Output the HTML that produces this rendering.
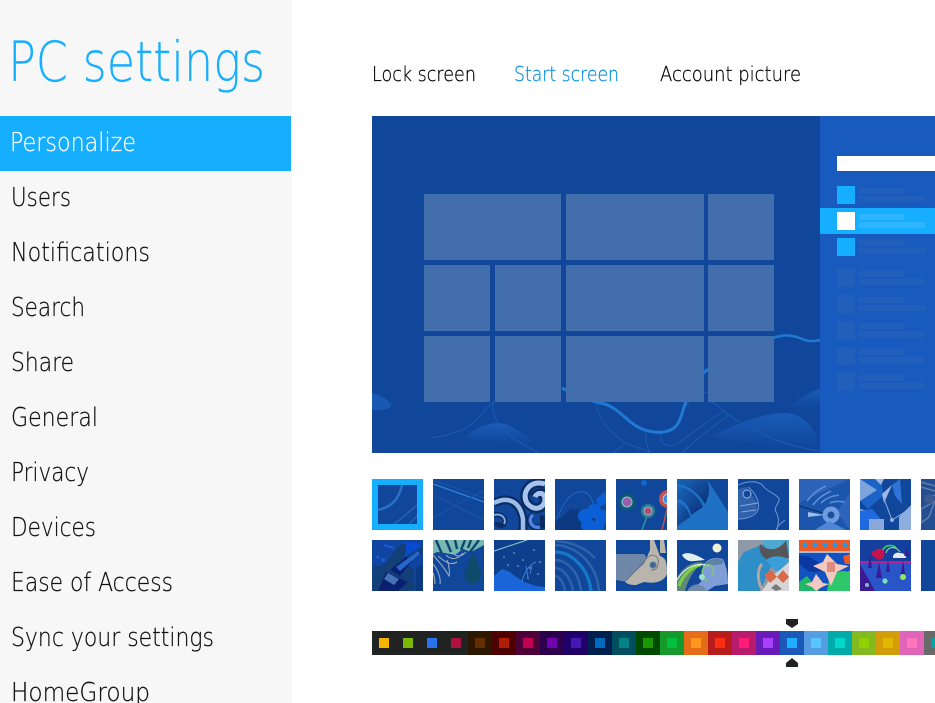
<!DOCTYPE html>
<html><head><meta charset="utf-8"><title>PC settings</title>
<style>
html,body{margin:0;padding:0;background:#fff;width:935px;height:703px;overflow:hidden}
svg{display:block}
text{font-family:"DejaVu Sans","Liberation Sans",sans-serif;font-weight:200}
.n{font-size:25.5px;fill:#111;stroke:#111;stroke-width:.25px}
.w{font-size:25.5px;fill:#fff;stroke:#fff;stroke-width:.25px}
.t{font-size:20px;fill:#000;stroke:#000;stroke-width:.25px}
.a{font-size:20px;fill:#0a8fe0;stroke:#0a8fe0;stroke-width:.25px}
</style></head><body>
<svg width="935" height="703" viewBox="0 0 935 703" xmlns="http://www.w3.org/2000/svg">
<defs>
<linearGradient id="b" x1="0" y1="0" x2="0" y2="1"><stop offset="0" stop-color="#1a5cb8"/><stop offset="1" stop-color="#10479a"/></linearGradient>
<linearGradient id="s" x1="0" y1="0" x2="1" y2="1"><stop offset="0" stop-color="#1a66b8"/><stop offset="1" stop-color="#0a2f78"/></linearGradient>
</defs>
<rect x="0" y="0" width="292" height="703" fill="#f7f7f7"/>
<rect x="0" y="116" width="291" height="55" fill="#16aeff"/>
<text x="8" y="81" font-size="55" fill="#16aeff" stroke="#16aeff" stroke-width=".2" textLength="257" lengthAdjust="spacingAndGlyphs">PC settings</text>
<text x="10" y="151" class="w" textLength="126" lengthAdjust="spacingAndGlyphs">Personalize</text>
<text x="11" y="206" class="n" textLength="60" lengthAdjust="spacingAndGlyphs">Users</text>
<text x="11" y="261" class="n" textLength="139" lengthAdjust="spacingAndGlyphs">Notifications</text>
<text x="11" y="316" class="n" textLength="74" lengthAdjust="spacingAndGlyphs">Search</text>
<text x="11" y="371" class="n" textLength="63" lengthAdjust="spacingAndGlyphs">Share</text>
<text x="11" y="426" class="n" textLength="87" lengthAdjust="spacingAndGlyphs">General</text>
<text x="11" y="481" class="n" textLength="78" lengthAdjust="spacingAndGlyphs">Privacy</text>
<text x="11" y="536" class="n" textLength="85" lengthAdjust="spacingAndGlyphs">Devices</text>
<text x="11" y="591" class="n" textLength="162" lengthAdjust="spacingAndGlyphs">Ease of Access</text>
<text x="11" y="646" class="n" textLength="203" lengthAdjust="spacingAndGlyphs">Sync your settings</text>
<text x="11" y="701" class="n" textLength="139" lengthAdjust="spacingAndGlyphs">HomeGroup</text>

<text x="372" y="81" class="t" textLength="104" lengthAdjust="spacingAndGlyphs">Lock screen</text>
<text x="514" y="81" class="a" textLength="105" lengthAdjust="spacingAndGlyphs">Start screen</text>
<text x="660" y="81" class="t" textLength="141" lengthAdjust="spacingAndGlyphs">Account picture</text>

<!-- preview -->
<rect x="372" y="116" width="563" height="337" fill="#10479a"/>
<path d="M372 393C381 395 389 400 391 405C391 410 381 410 372 410Z" fill="#1a59b3"/>
<path d="M466 437C478 424 498 420 510 426C520 431 529 438 535 443C510 444 485 442 466 437Z" fill="url(#b)"/>
<path d="M712 436C740 422 765 413 785 413C805 414 817 430 819 447C785 446 745 444 712 436Z" fill="url(#b)"/>
<path d="M792 406C798 398 810 392 820 389V408C810 408 800 408 792 406Z" fill="url(#b)"/>
<g fill="none" stroke="#1a5cb2" stroke-width="1">
<path d="M430 438C460 434 474 426 485 410C490 404 494 402 498 400"/>
<path d="M493 402C490 425 515 442 540 453"/>
<path d="M596 403C598 420 610 432 625 443L652 453"/>
<path d="M625 443C622 447 618 450 612 453"/>
<path d="M646 432C645 440 647 447 650 453"/>
<path d="M662 432C658 442 664 446 672 446C680 445 690 432 724 411"/>
<path d="M682 453C695 440 715 425 728 416C725 410 718 405 708 400"/>
<path d="M728 414C750 430 785 447 820 451"/>
<path d="M686 406C692 398 700 394 708 392"/>
</g>
<path d="M562 388C575 395 590 401 600 403C615 405 624 418 636 426C648 433 664 435 674 428C682 422 683 405 690 392C695 382 702 374 708 369" fill="none" stroke="#2079d4" stroke-width="3"/>
<path d="M774 338C785 333 795 336 805 340C812 342 816 341 820 340" fill="none" stroke="#2079d4" stroke-width="2.5"/>
<g fill="#436eac">
<rect x="424" y="194" width="137" height="66"/><rect x="566" y="194" width="138" height="66"/><rect x="708" y="194" width="66" height="66"/>
<rect x="424" y="265" width="66" height="66"/><rect x="495" y="265" width="66" height="66"/><rect x="566" y="265" width="138" height="66"/><rect x="708" y="265" width="66" height="66"/>
<rect x="424" y="336" width="66" height="66"/><rect x="495" y="336" width="66" height="66"/><rect x="566" y="336" width="138" height="66"/><rect x="708" y="336" width="66" height="66"/>
</g>
<rect x="820" y="116" width="115" height="337" fill="#185abd"/>
<rect x="837" y="156" width="98" height="15" fill="#fff"/>
<rect x="820" y="208" width="115" height="26" fill="#16aeff"/>
<g fill="#16aeff"><rect x="837" y="186" width="18" height="18"/><rect x="837" y="238" width="18" height="18"/></g>
<rect x="837" y="212" width="18" height="18" fill="#fff"/>
<g fill="#2160ba">
<rect x="837" y="269" width="18" height="18"/><rect x="837" y="295" width="18" height="18"/><rect x="837" y="321" width="18" height="18"/><rect x="837" y="347" width="18" height="18"/><rect x="837" y="373" width="18" height="18"/>
<rect x="859" y="188" width="45" height="6"/><rect x="859" y="196" width="66" height="6"/>
<rect x="859" y="240" width="45" height="6"/><rect x="859" y="248" width="66" height="6"/>
<rect x="859" y="271" width="45" height="6"/><rect x="859" y="279" width="66" height="6"/>
<rect x="859" y="297" width="45" height="6"/><rect x="859" y="305" width="66" height="6"/>
<rect x="859" y="323" width="45" height="6"/><rect x="859" y="331" width="66" height="6"/>
<rect x="859" y="349" width="45" height="6"/><rect x="859" y="357" width="66" height="6"/>
<rect x="859" y="375" width="45" height="6"/><rect x="859" y="383" width="66" height="6"/>
</g>
<g fill="#2fb5ff"><rect x="859" y="214" width="45" height="6"/><rect x="859" y="222" width="66" height="6"/></g>

<!-- row 1 thumbs -->
<svg x="372" y="479" width="51" height="51" viewBox="0 0 51 51"><rect width="51" height="51" fill="#16aeff"/><rect x="6" y="6" width="39" height="39" fill="#10479a"/>
<svg x="6" y="6" width="39" height="39" viewBox="6 6 39 39"><path d="M6 31C20 28 27 20 30 6" fill="none" stroke="#2a70c4" stroke-width="2.5"/><path d="M22 45C32 38 38 32 46 25M37 45L46 36" fill="none" stroke="#2464b8" stroke-width="1.4"/></svg></svg>
<svg x="433" y="479" width="51" height="51" viewBox="0 0 51 51"><rect width="51" height="51" fill="#10479a"/><path d="M0 5L51 23" stroke="#2a86d8" stroke-width="1.2"/><path d="M0 1L51 19M0 16L51 41M0 39L51 11" stroke="#1a55ac" stroke-width="1"/></svg>
<svg x="494" y="479" width="51" height="51" viewBox="0 0 51 51"><rect width="51" height="51" fill="#10479a"/>
<g fill="none"><path d="M0 24C14 17 26 22 29 40V51" stroke="#0b2c62" stroke-width="9"/><path d="M0 24C14 17 26 22 29 40V51" stroke="#9cbdea" stroke-width="4.5"/><path d="M51 5C36 0 27 14 33 24C40 33 51 30 51 19C50 13 43 13 41 18" stroke="#0b2c62" stroke-width="10"/><path d="M51 5C36 0 27 14 33 24C40 33 51 30 51 19C50 13 43 13 41 18" stroke="#a8c4ee" stroke-width="5"/><path d="M0 36C8 34 13 40 10 45C7 48 3 46 3 43" stroke="#0b2c62" stroke-width="5"/><path d="M0 36C8 34 13 40 10 45" stroke="#7fa7e2" stroke-width="2"/><path d="M39 36C32 40 37 51 46 48C51 45 50 39 46 39" stroke="#0b2c62" stroke-width="6"/><path d="M39 36C33 41 38 50 46 48" stroke="#4d82e6" stroke-width="3.5"/></g></svg>
<svg x="555" y="479" width="51" height="51" viewBox="0 0 51 51"><rect width="51" height="51" fill="#10479a"/><path d="M0 43L16 30L45 32L35 51H0Z" fill="#0c3a82"/><path d="M2 40C10 18 20 11 30 13C36 15 38 24 40 30" fill="none" stroke="#1f66c4" stroke-width="1"/><g fill="#0a5fd6"><circle cx="39" cy="32" r="7"/><circle cx="30" cy="37" r="7"/><circle cx="47" cy="38" r="7"/><circle cx="33" cy="46" r="7"/><circle cx="43" cy="47" r="6"/><circle cx="46" cy="22" r="5"/><circle cx="50" cy="17" r="4"/></g></svg>
<svg x="616" y="479" width="51" height="51" viewBox="0 0 51 51"><rect width="51" height="51" fill="#10479a"/><path d="M12 28L28 44" stroke="#0e4a8e" stroke-width="1.5"/><path d="M33 32L26 51" stroke="#2a9a9c" stroke-width="1.4"/><path d="M51 30L46 51" stroke="#c85050" stroke-width="1.4"/><circle cx="28" cy="4" r="3" fill="#0a6ad0"/><circle cx="11" cy="23" r="8.5" fill="#0d5a6e"/><circle cx="11" cy="23" r="5" fill="#9a5fa8"/><circle cx="11" cy="23" r="5" fill="none" stroke="#8cc4e8" stroke-width="1"/><circle cx="32" cy="32" r="7" fill="#2e7f8e"/><circle cx="32" cy="32" r="4" fill="#ac4a78" stroke="#a0d0d8" stroke-width=".8"/><circle cx="52" cy="20" r="9" fill="#c85050"/><circle cx="52" cy="20" r="5" fill="#3d8fd8" stroke="#b8d8f0" stroke-width=".8"/></svg>
<svg x="677" y="479" width="51" height="51" viewBox="0 0 51 51"><rect width="51" height="51" fill="#1e70c4"/><path d="M30 0H51V33Z" fill="#10479a"/><path d="M0 0H30C33 8 33 16 28 25C22 15 12 6 0 5Z" fill="url(#s)"/><path d="M0 8C12 8 22 18 26 28L14 36C12 26 6 20 0 20Z" fill="url(#s)"/><path d="M0 24C6 24 11 30 13 38L0 47Z" fill="url(#s)"/></svg>
<svg x="738" y="479" width="51" height="51" viewBox="0 0 51 51"><rect width="51" height="51" fill="#10479a"/><path d="M0 6C12 1 22 2 26 8C30 13 40 16 41 20C42 24 35 28 38 33C42 40 40 46 39 51M0 40C10 40 18 36 20 31C22 24 18 14 10 8M47 41C43 44 39 48 38 51" fill="none" stroke="#7096cf" stroke-width="1"/><path d="M0 10L8 8L18 22L20 32L8 39L0 40Z" fill="#4a76bb" opacity=".55"/><circle cx="9" cy="15" r="4" fill="#10479a" stroke="#9ab4dc" stroke-width="1"/><path d="M2 27L20 24M3 33L18 31" stroke="#89a8d8" stroke-width="1"/></svg>
<svg x="799" y="479" width="51" height="51" viewBox="0 0 51 51"><rect width="51" height="51" fill="#2d63b8"/><path d="M0 24L51 0V14L38 33L51 51H0Z" fill="#1c56ac"/><g fill="none" stroke="#5e8fd6" stroke-width="1.6"><path d="M8 22C14 14 20 10 27 7"/><path d="M14 26C20 18 26 15 32 12"/><path d="M22 24C26 20 32 17 40 16"/><path d="M31 24C35 22 40 22 46 23"/></g><path d="M0 27L24 34" stroke="#0a2a66" stroke-width="1"/><path d="M9 33L25 36L9 38Z" fill="#9dbce8"/><circle cx="32" cy="36" r="8.5" fill="#6f9ce0"/><circle cx="32" cy="36" r="3.5" fill="#1c4f9e"/><path d="M16 51L30 42L47 51Z" fill="#4f86d6"/></svg>
<svg x="860" y="479" width="51" height="51" viewBox="0 0 51 51"><rect width="51" height="51" fill="#10479a"/><path d="M0 0H20L24 16L8 30L0 22Z" fill="#1c63c8"/><path d="M0 0L17 11L0 22Z" fill="#7fa4dc"/><path d="M15 0H24L21 6ZM22 15L32 6L24 24Z" fill="#9cb8e0"/><path d="M32 6L40 0L42 25L35 17Z" fill="#2e74d8"/><path d="M0 30L10 32L0 42Z" fill="#88a8dc"/><path d="M0 51V32L12 30L20 39V51Z" fill="#1f6ae0"/><path d="M9 40H24V51H9Z" fill="#8aa8dc"/><path d="M39 51V38L51 26V51Z" fill="#8dadde"/><path d="M23 17L32 41L48 31" fill="none" stroke="#8fb0e2" stroke-width="1"/><circle cx="32" cy="41" r="2" fill="#8fb0e2"/></svg>
<svg x="921" y="479" width="14" height="51" viewBox="0 0 14 51"><rect width="14" height="51" fill="#234f92"/><path d="M0 3L14 7M0 8L14 12M3 20L14 16M0 30L14 22L8 38L0 44Z" fill="none" stroke="#5f7aa8" stroke-width="1.6"/><circle cx="8" cy="20" r="5" fill="#3a5a90"/></svg>

<!-- row 2 thumbs -->
<svg x="372" y="540" width="51" height="51" viewBox="0 0 51 51"><rect width="51" height="51" fill="#0f45a0"/><path d="M30 3C38 0 51 3 51 10L42 20L30 15Z" fill="#0a4ad0"/><path d="M44 51V28L51 24V51Z" fill="#0c3a82"/><path d="M4 25C12 30 20 12 30 4C36 2 35 12 31 18L51 6V12L36 26C44 28 44 36 40 40C46 44 44 51 34 51H0V35C0 30 2 26 4 25Z" fill="#123f78"/><path d="M14 32L36 42L26 51H6ZM18 30L34 17L40 21L28 36Z" fill="#0a1f70"/><path d="M24 27L46 11L48 14L28 31Z" fill="#2667c8"/><path d="M16 33L27 39L22 45L12 39Z" fill="#4472b8"/><circle cx="11" cy="20" r="2" fill="#1a5cd8"/><circle cx="6" cy="17" r="1.5" fill="#1a5cd8"/><path d="M12 5L22 8" stroke="#1a5cd8" stroke-width="2"/></svg>
<svg x="433" y="540" width="51" height="51" viewBox="0 0 51 51"><rect width="51" height="51" fill="#10479a"/><path d="M0 0H51V5L38 12L30 9L22 15L12 13L4 12L0 14Z" fill="#79b7b2"/><path d="M3 0L9 14M13 0L18 12M22 0L24 9M32 0L28 10M38 0L35 8M46 0L37 12" stroke="#0e4870" stroke-width="2.4"/><path d="M40 12C44 24 50 30 47 38C45 45 35 45 32 38C30 30 36 24 40 12Z" fill="#0e4a6a"/><g fill="none" stroke="#9aa8b8" stroke-width="1.1"><path d="M0 15C8 24 13 30 16 36C17 34 16 24 14 20M0 24C5 30 8 38 7 44M0 33C2 38 2 41 2 44M5 16C12 22 18 26 24 22M13 15C18 20 24 20 30 13M22 15C26 17 29 16 33 12"/></g></svg>
<svg x="494" y="540" width="51" height="51" viewBox="0 0 51 51"><rect width="51" height="51" fill="#0e3f8c"/><path d="M0 11L33 0" stroke="#7fb6c8" stroke-width="1.2"/><g fill="#8fb8d8"><circle cx="10" cy="17" r=".8"/><circle cx="20" cy="13" r=".8"/><circle cx="29" cy="20" r=".8"/><circle cx="40" cy="10" r=".8"/><circle cx="46" cy="22" r=".8"/><circle cx="14" cy="25" r=".8"/><circle cx="24" cy="26" r=".8"/><circle cx="36" cy="28" r=".8"/><circle cx="44" cy="34" r=".8"/><circle cx="34" cy="38" r=".8"/></g><path d="M0 36L8 29L16 32L22 37L30 42L42 46L51 47V51H0Z" fill="#1a66d8"/><path d="M28 42C30 32 36 24 42 22M32 26L34 38M38 26L36 34" fill="none" stroke="#3f7fd6" stroke-width="1"/></svg>
<svg x="555" y="540" width="51" height="51" viewBox="0 0 51 51"><rect width="51" height="51" fill="#10479a"/><g fill="none" stroke="#2f62ab" stroke-width="2.5"><path d="M0 1C18 2 30 8 40 18"/><path d="M0 20C12 20 24 32 26 51"/><path d="M0 28C8 28 16 38 18 51"/><path d="M0 36C4 36 9 43 10 51"/></g><path d="M0 5C24 6 42 26 44 51" fill="none" stroke="#2f62ab" stroke-width="2.5"/><path d="M0 12C18 12 34 30 36 51" fill="none" stroke="#1579c8" stroke-width="3.2"/></svg>
<svg x="616" y="540" width="51" height="51" viewBox="0 0 51 51"><rect width="51" height="51" fill="#10479a"/><path d="M0 14L28 14L40 30L12 42L0 40Z" fill="#6f87a8"/><path d="M34 0H38L44 16C50 18 51 22 51 34C48 42 38 44 28 42L20 45C14 45 10 44 9 41L28 24L34 10Z" fill="#b9b5ad"/><path d="M44 0H48L50 13L44 13Z" fill="#b9b5ad"/><circle cx="37" cy="25" r="3.5" fill="#3f7f98"/><circle cx="37" cy="25" r="1.6" fill="#5a4a98"/><path d="M10 41L32 17C38 12 44 18 42 24C41 30 38 30 35 30" fill="none" stroke="#6a6a70" stroke-width=".8"/></svg>
<svg x="677" y="540" width="51" height="51" viewBox="0 0 51 51"><rect width="51" height="51" fill="#10479a"/><path d="M26 26C30 18 38 17 46 19C48 24 51 30 51 44L38 46L30 51H12L24 42Z" fill="#7f9ed8"/><path d="M28 23C34 18 42 18 46 20L46 24L30 26Z" fill="#5f83a8"/><circle cx="40" cy="8" r="4.5" fill="#eef0d8"/><path d="M5 15C10 10 22 16 28 20L18 21C12 22 8 20 5 15Z" fill="#dfeef0"/><path d="M0 38C6 26 18 20 28 23C24 24 14 30 8 51H0Z" fill="#5f8a7a"/><path d="M2 46C6 34 16 26 24 25" fill="none" stroke="#7ad43a" stroke-width="3"/><path d="M0 40C8 26 22 22 32 26" fill="none" stroke="#dff0f0" stroke-width="1.2"/><path d="M31 41C24 38 23 28 30 25C36 24 38 30 35 36" fill="none" stroke="#7fc86a" stroke-width="1.6"/><circle cx="25" cy="37" r="3" fill="#9ce0c8"/><path d="M10 51C14 44 22 42 28 48L30 51Z" fill="#6f88a8"/></svg>
<svg x="738" y="540" width="51" height="51" viewBox="0 0 51 51"><rect width="51" height="51" fill="#8f9aa8"/><path d="M6 12L26 4L36 20L22 51H0V22Z" fill="#2e8ec8"/><path d="M24 0H51V14L32 18Z" fill="#4ea8d0"/><path d="M22 4C32 14 44 8 48 0L51 18L30 20C24 18 20 10 22 4Z" fill="#55555a"/><path d="M28 20C36 14 46 16 51 20L44 32L36 30Z" fill="#3a9fd8"/><path d="M24 24C18 30 20 46 26 51" fill="none" stroke="#b0a8a0" stroke-width="3"/><path d="M34 36L24 51H51V22L42 30Z" fill="#d6d6d6"/><path d="M26 35L33 30L39 37L32 43Z" fill="#d9694a"/><path d="M39 37L45 30L51 37L45 43Z" fill="#d9694a"/><path d="M38 44L44 49L38 51L33 48Z" fill="#7a7a7e"/></svg>
<svg x="799" y="540" width="51" height="51" viewBox="0 0 51 51"><rect width="51" height="51" fill="#1352c0"/><path d="M36 34C44 28 48 34 51 30V51H28L30 40Z" fill="#2ec86a"/><path d="M0 42L8 36L20 51H0Z" fill="#22b86a"/><path d="M0 16C10 14 20 22 28 30L14 32C8 32 4 26 0 24Z" fill="#0a38a0"/><rect width="51" height="11" fill="#ed5a26"/><rect y="11" width="51" height="2" fill="#e8e8e0" opacity=".7"/><path d="M3 5L6 2L9 5L6 8ZM13 5L16 2L19 5L16 8ZM23 5L26 2L29 5L26 8ZM33 5L36 2L39 5L36 8ZM43 5L46 2L49 5L46 8Z" fill="#1e9be8"/><path d="M28 14L38 24L50 26L38 32L32 46L26 32L14 26L24 22Z" fill="#f2c8c0"/><path d="M28 22H36V32H28Z" fill="#e08a80"/><path d="M17 34L24 43L30 44L23 47L17 51L13 47L6 44L13 42Z" fill="#f2c8c0"/><path d="M44 16L51 14V24L46 24Z" fill="#ed5a26"/></svg>
<svg x="860" y="540" width="51" height="51" viewBox="0 0 51 51"><rect width="51" height="51" fill="#2a55c8"/><rect width="51" height="21" fill="#143f9e"/><rect y="21" width="51" height="2.5" fill="#b8209a"/><path d="M0 24L15 51H0Z" fill="#3c1a94"/><path d="M22 14C22 4 34 4 36 8" fill="none" stroke="#2fc860" stroke-width="1.8"/><path d="M26 13C28 6 36 6 40 12" fill="none" stroke="#8ee8a8" stroke-width="1"/><circle cx="19" cy="14" r="5.5" fill="#c8104a"/><rect x="12" y="11" width="7" height="5" fill="#c8104a"/><path d="M33 17C33 13 38 12 40 13C44 13 46 15 46 18H33Z" fill="#e8e8e8"/><g fill="#3c1a94"><path d="M10 14L12 28H8ZM19 22L22 38H16ZM28 20L30 32H26ZM43 20L45 34H41ZM47 9L50 16H44Z"/></g><circle cx="25" cy="41" r="2.6" fill="#7ae0c0"/><circle cx="43" cy="37" r="3" fill="#8ee860"/><circle cx="7" cy="45" r="2" fill="#8fb8d0"/></svg>
<svg x="921" y="540" width="14" height="51" viewBox="0 0 14 51"><rect width="14" height="51" fill="#10479a"/></svg>

<!-- colour bar -->
<g>
<rect x="372" y="631" width="96" height="24" fill="#212322"/>
<rect x="468" y="631" width="24" height="24" fill="#2e1700"/>
<rect x="492" y="631" width="24" height="24" fill="#4e0000"/>
<rect x="516" y="631" width="24" height="24" fill="#4e0038"/>
<rect x="540" y="631" width="24" height="24" fill="#2d004e"/>
<rect x="564" y="631" width="24" height="24" fill="#1f0068"/>
<rect x="588" y="631" width="24" height="24" fill="#001e4e"/>
<rect x="612" y="631" width="24" height="24" fill="#004d60"/>
<rect x="636" y="631" width="24" height="24" fill="#004a00"/>
<rect x="660" y="631" width="24" height="24" fill="#15992a"/>
<rect x="684" y="631" width="24" height="24" fill="#e56c19"/>
<rect x="708" y="631" width="24" height="24" fill="#b81b1b"/>
<rect x="732" y="631" width="24" height="24" fill="#b81b6c"/>
<rect x="756" y="631" width="24" height="24" fill="#691bb8"/>
<rect x="780" y="631" width="24" height="24" fill="#1b58b8"/>
<rect x="804" y="631" width="24" height="24" fill="#569ce3"/>
<rect x="828" y="631" width="24" height="24" fill="#00aaaa"/>
<rect x="852" y="631" width="24" height="24" fill="#83ba1f"/>
<rect x="876" y="631" width="24" height="24" fill="#d39d09"/>
<rect x="900" y="631" width="24" height="24" fill="#e064b7"/>
<rect x="924" y="631" width="11" height="24" fill="#696969"/>
<rect x="379" y="638" width="10" height="10" fill="#f4b300"/>
<rect x="403" y="638" width="10" height="10" fill="#78ba00"/>
<rect x="427" y="638" width="10" height="10" fill="#2673ec"/>
<rect x="451" y="638" width="10" height="10" fill="#ae113d"/>
<rect x="475" y="638" width="10" height="10" fill="#632f00"/>
<rect x="499" y="638" width="10" height="10" fill="#b01e00"/>
<rect x="523" y="638" width="10" height="10" fill="#c1004f"/>
<rect x="547" y="638" width="10" height="10" fill="#7200ac"/>
<rect x="571" y="638" width="10" height="10" fill="#4617b4"/>
<rect x="595" y="638" width="10" height="10" fill="#006ac1"/>
<rect x="619" y="638" width="10" height="10" fill="#008287"/>
<rect x="643" y="638" width="10" height="10" fill="#199900"/>
<rect x="667" y="638" width="10" height="10" fill="#00c13f"/>
<rect x="691" y="638" width="10" height="10" fill="#ff981d"/>
<rect x="715" y="638" width="10" height="10" fill="#ff2e12"/>
<rect x="739" y="638" width="10" height="10" fill="#ff1d77"/>
<rect x="763" y="638" width="10" height="10" fill="#aa40ff"/>
<rect x="787" y="638" width="10" height="10" fill="#1faeff"/>
<rect x="811" y="638" width="10" height="10" fill="#56c5ff"/>
<rect x="835" y="638" width="10" height="10" fill="#00d8cc"/>
<rect x="859" y="638" width="10" height="10" fill="#91d100"/>
<rect x="883" y="638" width="10" height="10" fill="#e1b700"/>
<rect x="907" y="638" width="10" height="10" fill="#ff76bc"/>
<rect x="931" y="638" width="4" height="10" fill="#00a4a4"/>
</g>
<path d="M786 619H798V624L792 628L786 624Z" fill="#212322"/>
<path d="M792 658L798 663V667H786V663Z" fill="#212322"/>
</svg>
</body></html>
